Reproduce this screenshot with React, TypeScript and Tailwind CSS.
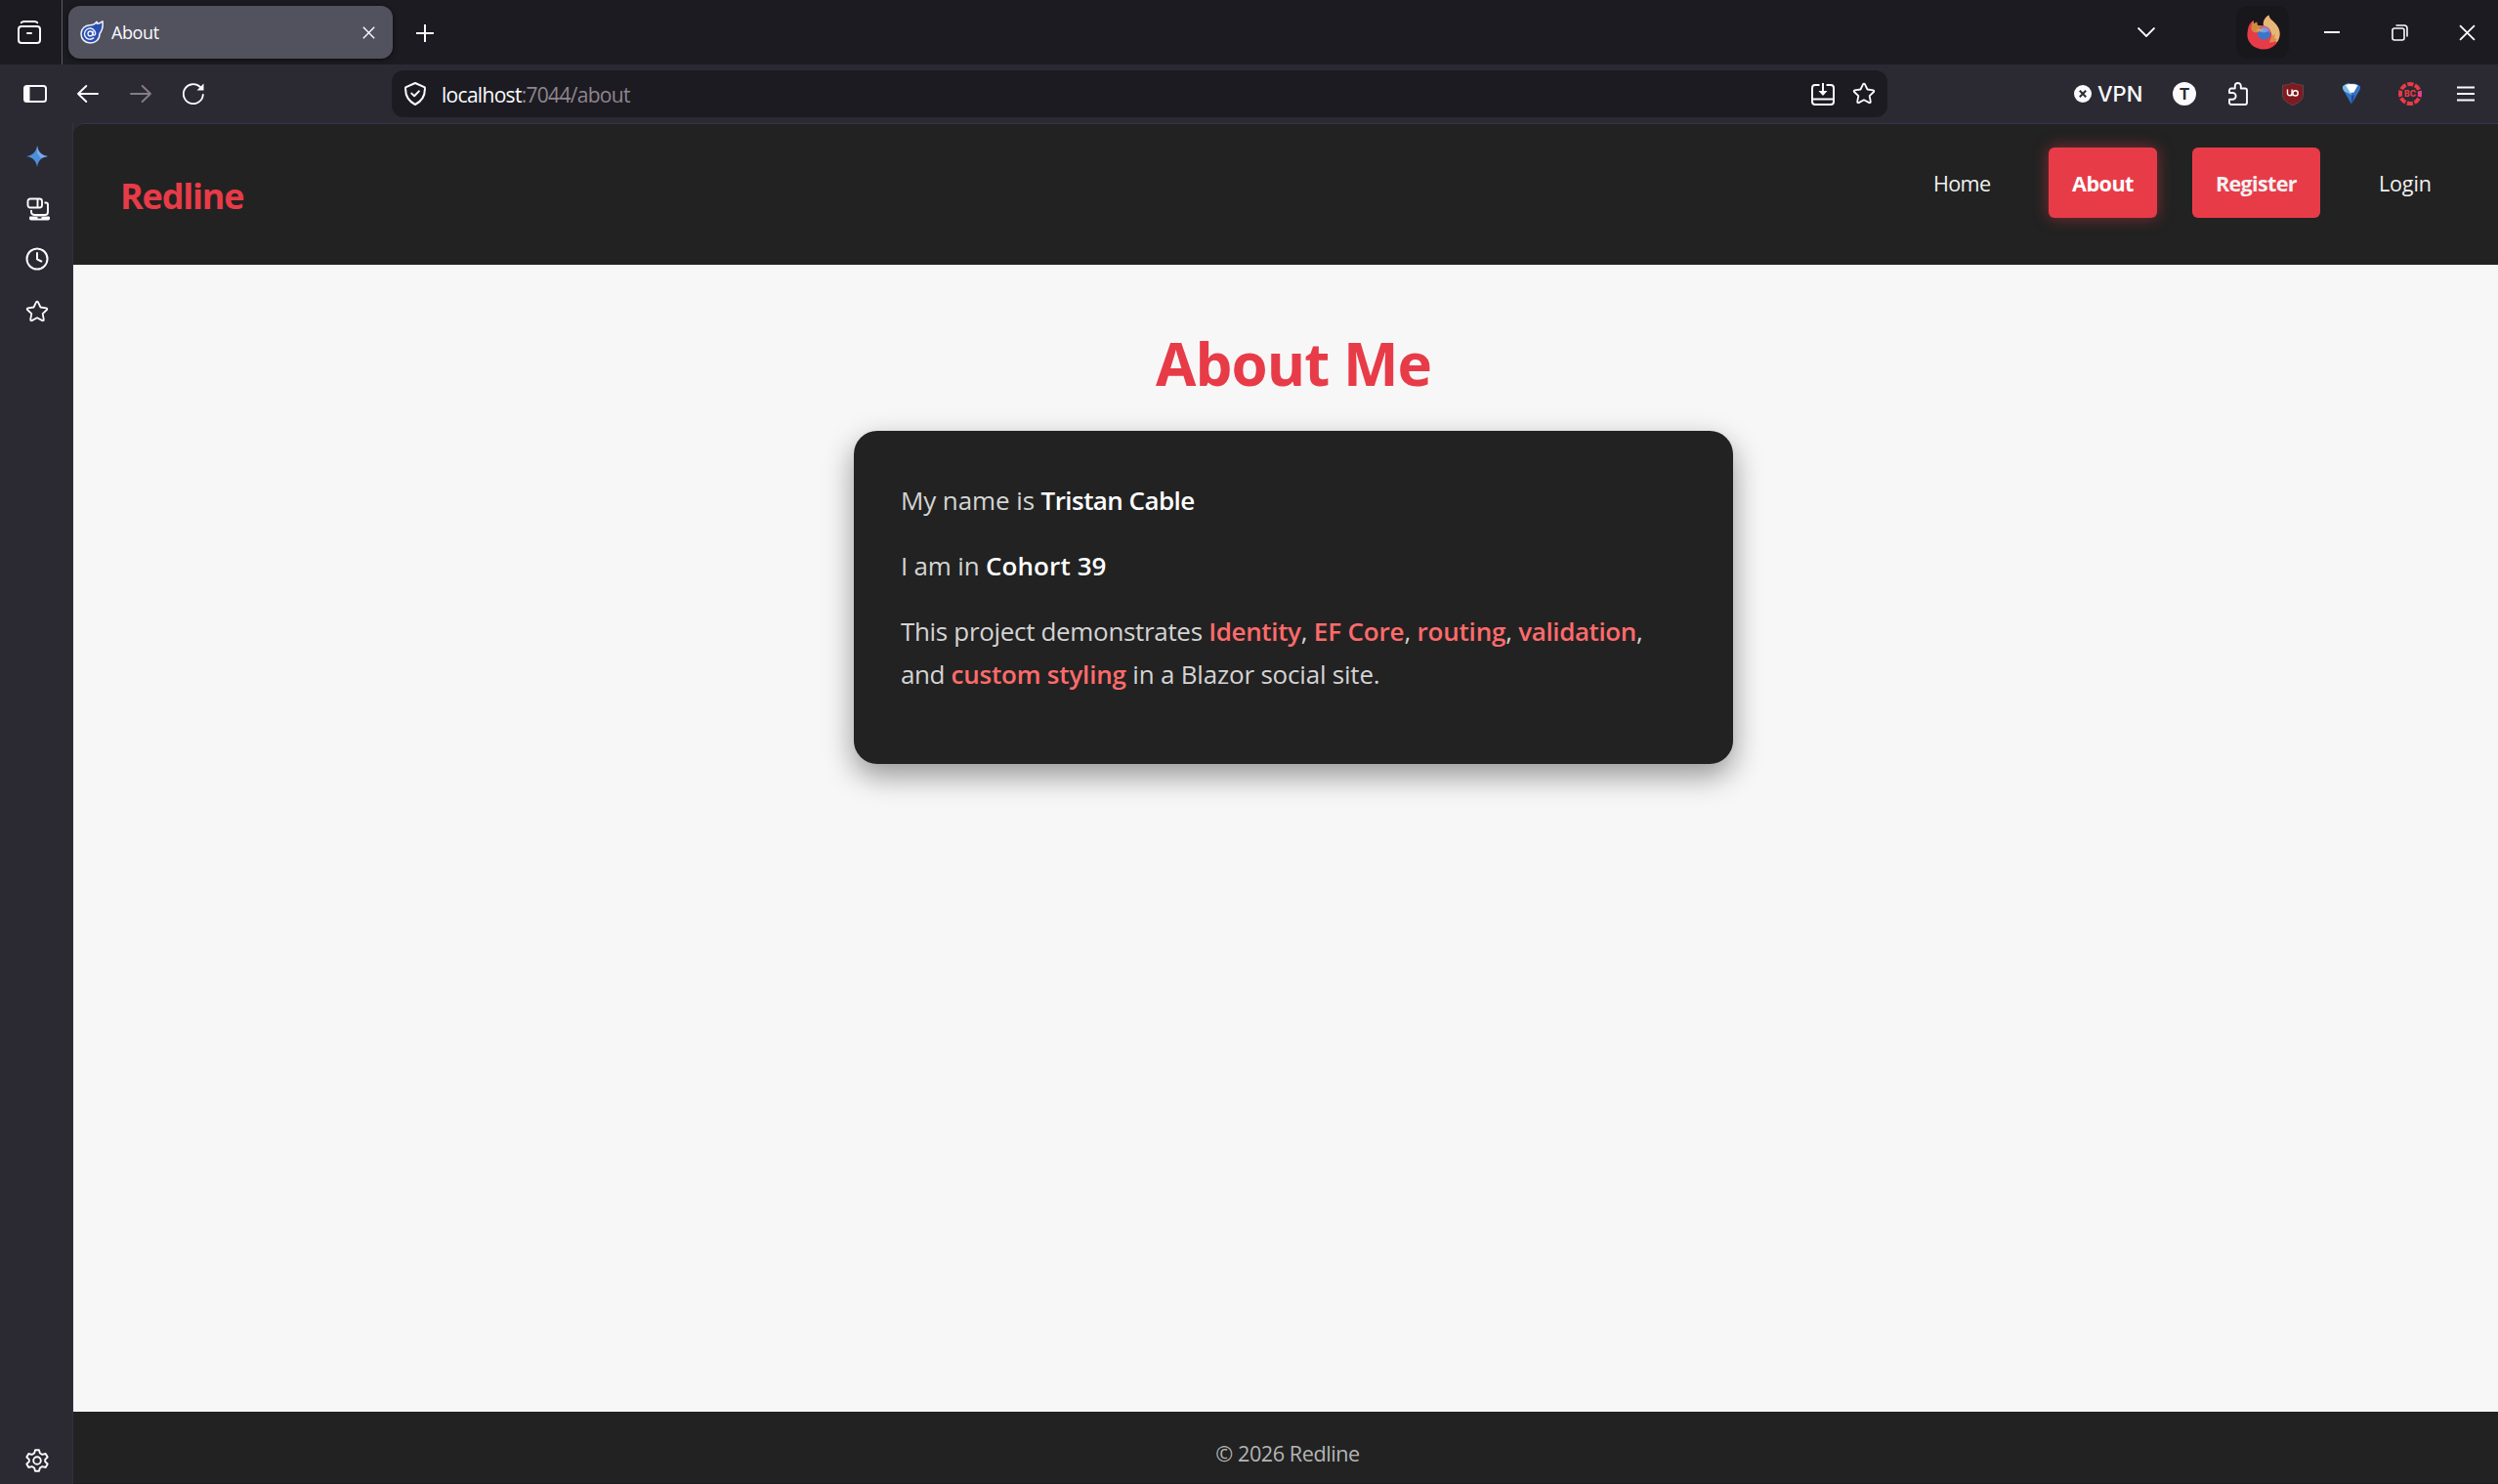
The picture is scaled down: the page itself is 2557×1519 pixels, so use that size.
import type { ReactNode } from 'react';

type IconProps = { className?: string };

function Stroke({ className = 'size-6', width = 2, children }: { className?: string; width?: number; children: ReactNode }) {
  return (
    <svg viewBox="0 0 24 24" fill="none" stroke="currentColor" strokeWidth={width} strokeLinecap="round" strokeLinejoin="round" className={`shrink-0 ${className}`}>
      {children}
    </svg>
  );
}

const StarIcon = ({ className }: IconProps) => (
  <Stroke className={className} width={1.8}>
    <path d="M11.1 2.1a1 1 0 0 1 1.8 0l2.6 5.4 6 .8a1 1 0 0 1 .5 1.7l-4.3 4.1 1.1 5.9a1 1 0 0 1-1.5 1.1L12 18.2l-5.3 2.9a1 1 0 0 1-1.5-1.1l1.1-5.9L2 10a1 1 0 0 1 .5-1.7l6-.8z" />
  </Stroke>
);

const BlazorIcon = () => (
  <svg viewBox="0 0 24 24" className="size-6 shrink-0">
    <path d="M23 .8c.6 5-.2 9.4-3 12.700 0 6-4.3 9.5-9.500 9.500C5 23 1 19 1 13.800 1 8.300 5.200 5 10 4.800c3.400 0 5.400-1.200 7-3.500l.6 1.900c1.800-.2 3.700-1 5.400-2.400z" fill="#2b4fae" stroke="#eef2ff" strokeWidth="1.5" strokeLinejoin="round" />
    <path d="M13.700 17.900a5.600 5.600 0 1 1 2-4.300c0 1.900-2.600 2.100-2.600.1v-2.400" fill="none" stroke="#eef2ff" strokeWidth="1.4" strokeLinecap="round" />
    <circle cx="10.4" cy="13.4" r="2.4" fill="none" stroke="#eef2ff" strokeWidth="1.4" />
  </svg>
);

const FirefoxIcon = () => (
  <svg viewBox="0 0 34 36" className="ml-px h-9 w-[34px]">
    <path d="M1 15C1.500 11 3.500 8 6.500 6l.7 3.200L10 7.500l1 3.500h6C16 6.500 19 2.500 22.500.5c.6 4 3 5 5.500 7.500 3.800 3.600 5.800 7.500 5.600 12C33.300 29.500 26 35.500 17 35.500S0 29 .3 20z" fill="#e83b48" />
    <path d="M17 11c-1-4.500 2-8.500 5.500-10.500.6 4 3 5 5.500 7.500 3.800 3.600 5.800 7.500 5.600 12-.1 3-1.100 5.600-2.800 8-2-1.500-5.300-1-7.800.5 2.500-3 3.400-7 1.500-11-1.500-3.500-4.500-4.500-7.500-6.500z" fill="#e6b877" />
    <path d="M6.500 6l.7 3.200L10 7.500l1 3.500c1.500 0 3 .4 4 1l2.500 3.200c-1.500 1.800-4.500.3-6.500 2.800-2.500 1-5-.2-6.500-3 0-4 .5-7 2-9z" fill="#cf8a3e" />
    <circle cx="17.5" cy="19" r="6.8" fill="#3f74c8" />
    <path d="M11.500 15.500c2-4.500 7-5.500 10.500-2 1.600 1.500 2.500 3.500 2 5.500-3-2.500-6-3-8.500-2 .8-.8 1.500-1 2.200-2-2 .8-4 .8-6.200.5z" fill="#c9618e" />
    <path d="M12.500 17c2.500 1.500 6.500 2 10-.5-1-2.800-4-4-7-3z" fill="#6f9fe8" />
    <path d="M10 14.500c2.500 0 5 .2 7.200 1-1.200 1.600-4.200.8-6.200 2.500z" fill="#dda35a" />
    <path d="M25 22l4-2-1 4 3 1-3 3-5 .5z" fill="#dd8a4a" />
  </svg>
);

const UblockIcon = () => (
  <svg viewBox="0 0 22 24" className="h-6 w-[22px]">
    <path d="M11 .5c3 1.800 6.500 2.700 10.500 2.700V13c0 5-4 8.300-10.500 10.700C4.500 21.300.5 18 .5 13V3.200C4.500 3.200 8 2.300 11 .5z" fill="#801a1e" stroke="#5f5560" strokeWidth=".7" />
    <path d="M5.500 7.500v4a2.300 2.300 0 0 0 4.600 0v-4m0 4.500v2.200" fill="none" stroke="#fff" strokeWidth="1.4" />
    <circle cx="13.6" cy="11.4" r="2.6" fill="none" stroke="#fff" strokeWidth="1.4" />
  </svg>
);

const GemIcon = () => (
  <svg viewBox="0 0 20 22" className="h-[22px] w-5">
    <path d="M1 3.500C3 1 6.500.5 10 .5s7 .5 9 3c.3 2-.4 3.800-1.600 5.500L11.500 19 10 21.500 3 9.500C1.500 7.500.7 5.600 1 3.500z" fill="#3572c6" />
    <path d="M1 3.500C3 1 6 .6 8 .6L10 12 3 8.800C1.600 7 .8 5.400 1 3.500z" fill="#7db9e8" />
    <path d="M4 2.300C8 .6 12.500.6 16.500 2.300L12.500 9.500 9 10z" fill="#fff" />
    <path d="m10 13 3-1-2 8-1 1.500z" fill="#1d4796" />
  </svg>
);

const CanvasIcon = () => (
  <svg viewBox="0 0 24 24" className="size-6">
    <circle cx="12" cy="12" r="10" fill="none" stroke="#e83b48" strokeWidth="4" strokeDasharray="6.200 1.654" strokeDashoffset="3.100" />
    <path d="M21.600 9.200a10 10 0 0 1 0 5.600" fill="none" stroke="#e83e8c" strokeWidth="4" />
    <text x="12" y="15" textAnchor="middle" className="fill-[#e83b48] font-[Inter,sans-serif] text-[8.5px] font-extrabold">BC</text>
  </svg>
);

const CloseIcon = ({ className }: IconProps) => (
  <svg viewBox="0 0 16 16" fill="none" stroke="currentColor" strokeWidth="1.7" className={className}>
    <path d="m1 1 14 14M15 1 1 15" />
  </svg>
);

function TabStrip() {
  return (
    <div className="flex h-[66px] bg-[#1c1b22]">
      <div className="flex w-16 items-center border-r border-[#5b5a66] pl-[18px]">
        <svg viewBox="0 0 24 24" fill="none" stroke="currentColor" strokeWidth="2" strokeLinecap="round" className="size-6">
          <rect x="1" y="6" width="22" height="17" rx="3" />
          <path d="M3.800 2.200C4.500 1.400 5.200 1 6.500 1h11c1.300 0 2 .4 2.700 1.200M10 13h4" />
        </svg>
      </div>
      <div className="ml-1.5 mt-1.5 flex h-[54px] w-[332px] items-center rounded-xl bg-[#52525e] pl-3 pr-[18px] shadow-[0_1px_5px_rgba(0,0,0,0.6)]">
        <BlazorIcon />
        <span className="ml-2 mt-px flex-1 text-[18px] tracking-[-0.4px]">About</span>
        <CloseIcon className="size-[13px]" />
      </div>
      <svg viewBox="0 0 18 18" stroke="currentColor" strokeWidth="2" className="ml-[23.500px] mt-[25px] size-[18px]">
        <path d="M9 0v18M0 9h18" />
      </svg>
      <div className="ml-auto flex">
        <svg viewBox="0 0 18 10" fill="none" stroke="currentColor" strokeWidth="1.9" className="mr-[83px] mt-7 h-2.5 w-[18px]">
          <path d="M.5.5 9 9 17.500.5" />
        </svg>
        <div className="mt-1.5 flex size-[54px] items-center justify-center rounded-xl bg-[#18171c]">
          <FirefoxIcon />
        </div>
        <div className="ml-9 mt-8 h-0.5 w-4 bg-[#fbfbfe]" />
        <svg viewBox="0 0 17 17" fill="none" stroke="currentColor" strokeWidth="1.6" className="ml-[53px] mt-[25px] size-[17px]">
          <rect x="1" y="4" width="12" height="12" rx="2" />
          <path d="M4.500 1H13a3 3 0 0 1 3 3v8.500" />
        </svg>
        <CloseIcon className="ml-[52px] mr-[23px] mt-[25px] size-[17px]" />
      </div>
    </div>
  );
}

function Toolbar() {
  return (
    <div className="flex h-[60px] items-center bg-[#2b2a33]">
      <svg viewBox="0 0 24 18" className="ml-6 h-[18px] w-6">
        <rect x="1" y="1" width="22" height="16" rx="2.5" fill="none" stroke="currentColor" strokeWidth="2" />
        <path d="M2 1h4.500v16H2z" fill="currentColor" />
      </svg>
      <svg viewBox="0 0 22 18" fill="none" stroke="currentColor" strokeWidth="1.9" strokeLinecap="round" strokeLinejoin="round" className="ml-[31px] h-[18px] w-[22px]">
        <path d="M21 9H1m8.300-8L1 9l8.300 8" />
      </svg>
      <svg viewBox="0 0 22 18" fill="none" stroke="currentColor" strokeWidth="1.9" strokeLinecap="round" strokeLinejoin="round" className="ml-8 h-[18px] w-[22px] text-[#857d87]">
        <path d="M1 9h20m-8.300-8L21 9l-8.300 8" />
      </svg>
      <svg viewBox="0 0 22 22" fill="none" stroke="currentColor" strokeWidth="1.9" strokeLinecap="round" className="ml-8 size-[22px]">
        <path d="M20.800 12A10 10 0 1 1 18 4.200" />
        <path d="M21.500.5v7h-7z" fill="currentColor" stroke="none" />
      </svg>

      <div className="ml-48 flex h-12 w-[1531px] items-center rounded-xl bg-[#1c1b22] px-3">
        <Stroke>
          <path d="M12 1 21.800 5.300c.6 7-2.300 13.900-9.800 17.700C4.500 19.200 1.600 12.300 2.200 5.300z" />
          <path d="m8.300 11.600 2.800 2.700 4.800-4.900" />
        </Stroke>
        <span className="ml-[15px] mt-[3px] text-[21px] tracking-[-0.7px]">
          localhost<span className="text-[#8f858f]">:7044/about</span>
        </span>
        <svg viewBox="0 0 24 24" fill="none" stroke="currentColor" strokeWidth="2" className="ml-auto size-6">
          <path d="M8.500 3H4a3 3 0 0 0-3 3v14a3 3 0 0 0 3 3h16a3 3 0 0 0 3-3V6a3 3 0 0 0-3-3h-4.500M1 17.500h22M12 1v10" />
          <path d="M7.500 9h9L12 14z" fill="currentColor" stroke="none" />
        </svg>
        <StarIcon className="ml-[18px] size-6" />
      </div>

      <div className="ml-auto flex items-center">
        <svg viewBox="0 0 18 18" className="size-[18px]">
          <circle cx="9" cy="9" r="9" fill="currentColor" />
          <path d="m5.800 5.800 6.400 6.400m0-6.400-6.400 6.400" stroke="#2b2a33" strokeWidth="2" />
        </svg>
        <span className="ml-1.5 w-[46px] font-[Inter,sans-serif] text-[22px] font-medium">VPN</span>
        <div className="ml-[31px] flex size-6 items-center justify-center rounded-full bg-[#fbfbfe] font-[Inter,sans-serif] text-[16px] font-bold text-[#2b2a33]">T</div>
        <svg viewBox="0 0 20 24" fill="none" stroke="currentColor" strokeWidth="1.9" strokeLinejoin="round" className="ml-[33px] h-6 w-5">
          <path d="M1 11V8.500a2 2 0 0 1 2-2h3.800V4a3 3 0 0 1 6 0v2.500H17a2 2 0 0 1 2 2V21a2 2 0 0 1-2 2H3a2 2 0 0 1-2-2v-3.300h3.300a3.300 3.300 0 0 0 0-6.700z" />
        </svg>
        <div className="ml-[35px]"><UblockIcon /></div>
        <div className="ml-[39px]"><GemIcon /></div>
        <div className="ml-[38px]"><CanvasIcon /></div>
        <svg viewBox="0 0 18 16" stroke="currentColor" strokeWidth="1.8" className="ml-9 mr-6 h-4 w-[18px]">
          <path d="M0 1.500h18M0 8h18M0 14.500h18" />
        </svg>
      </div>
    </div>
  );
}

function Sidebar() {
  return (
    <aside className="flex w-[75px] shrink-0 flex-col items-center border-r border-[#32313f] bg-[#2b2a33] pb-3 pl-0.5 pt-[23px]">
      <svg viewBox="0 0 22 22" className="size-[22px]">
        <path d="M11 0c1 6.500 4.200 9.800 11 11-6.800 1.200-10 4.500-11 11C10 15.500 6.800 12.200 0 11 6.800 9.800 10 6.500 11 0z" fill="#4a8fdc" />
        <path d="M11 0c1 6.500 4.200 9.800 11 11l-7 1.700-4-4.700z" fill="#7fa6e6" />
      </svg>
      <svg viewBox="0 0 24 24" fill="none" stroke="currentColor" strokeWidth="1.9" strokeLinejoin="round" className="ml-px mt-[31px] size-6">
        <rect x="1.5" y="1.5" width="14.5" height="9" rx="2.5" />
        <path d="M11.500 1.500v9M18.500 5.500h1.500a2 2 0 0 1 2 2V15c0 2-1 3-3 3H8.500c-2 0-3.500-1-3.500-3v-2" />
        <path d="M4 19.500h19a1 1 0 0 1 1 1v1.300a1.800 1.800 0 0 1-1.800 1.800H4.800A1.800 1.800 0 0 1 3 21.800v-1.300a1 1 0 0 1 1-1z" fill="currentColor" stroke="none" />
        <path d="M11.500 20.800h4" stroke="#2b2a33" strokeWidth="1.5" />
      </svg>
      <Stroke className="mt-[27px] size-6">
        <circle cx="12" cy="12" r="10.5" />
        <path d="M12 6v6.300l4.300 2.200" />
      </Stroke>
      <StarIcon className="mt-[30px] size-6" />
      <Stroke className="mt-auto size-6" width={1.9}>
        <path d="M10 1.200h4l.9 3.300 2.400 1.400 3.400-.9 2 3.500-2.500 2.400v2.200l2.500 2.400-2 3.500-3.400-.9-2.400 1.400-.9 3.300h-4l-.9-3.300-2.400-1.400-3.400.9-2-3.500 2.500-2.400v-2.200L1.300 8.500l2-3.500 3.400.9 2.400-1.400z" />
        <circle cx="12" cy="12" r="3.8" />
      </Stroke>
    </aside>
  );
}

function SiteHeader() {
  return (
    <header className="flex h-36 items-start justify-between bg-[#222222] pl-12 pr-[45px] pt-6 text-[#f1f1f1]">
      <a className="mt-[26px] text-[36px] leading-[48px] font-bold tracking-[-1.2px] text-[#e83b48]">Redline</a>
      <nav className="flex gap-9 text-[21.6px] leading-[70px]">
        <a className="h-[72px] w-[106px] px-6 pt-0.5 tracking-[-0.65px]">Home</a>
        <a className="h-[72px] w-[111px] rounded-md bg-[#e83b48] px-6 pt-0.5 font-bold tracking-[-0.5px] text-white shadow-[0_0_15px_rgba(230,57,70,0.5)]">About</a>
        <a className="h-[72px] w-[131px] rounded-md bg-[#e83b48] px-6 pt-0.5 font-bold tracking-[-0.7px]">Register</a>
        <a className="h-[72px] w-[101px] px-6 pt-0.5 tracking-[-0.2px]">Login</a>
      </nav>
    </header>
  );
}

const Tag = ({ children, className = '' }: { children: ReactNode; className?: string }) => (
  <span className={`font-semibold text-[#ff6b6b] ${className}`}>{children}</span>
);

function AboutPage() {
  return (
    <main className="flex-1 bg-[#f7f7f7] pl-4 pt-[65px]">
      <h1 className="text-center text-[60px] leading-[72px] font-bold tracking-[-0.95px] text-[#e83b48]">About Me</h1>
      <section className="mx-auto mt-[33px] h-[341px] w-[900px] rounded-3xl bg-[#222222] px-12 pt-[49px] text-[26px] leading-[44.88px] text-[#d4d4d4] shadow-[0_12px_30px_rgba(0,0,0,0.4)]">
        <p className="mb-[22.4px] tracking-[-0.1px]">
          My name is <span className="font-semibold tracking-[-0.57px] text-white">Tristan Cable</span>
        </p>
        <p className="mb-[21.4px] tracking-[-0.2px]">
          I am in <span className="font-semibold tracking-[0.1px] text-white">Cohort 39</span>
        </p>
        <p className="tracking-[-0.2px]">
          <span className="tracking-[-0.33px]">This project demonstrates </span>
          <Tag className="tracking-[-0.35px]">Identity</Tag>, <Tag className="tracking-[-0.15px]">EF Core</Tag>, <Tag>routing</Tag>,{' '}
          <Tag className="tracking-[-0.4px]">validation</Tag>,
          <br />
          <span className="tracking-[-0.4px]">and </span>
          <Tag className="tracking-[-0.2px]">custom styling</Tag> in a Blazor social site.
        </p>
      </section>
    </main>
  );
}

export default function App() {
  return (
    <div className="flex h-[1519px] w-[2557px] flex-col overflow-hidden bg-[#2b2a33] font-['Open_Sans',sans-serif] text-[#fbfbfe]">
      <TabStrip />
      <Toolbar />
      <div className="flex flex-1">
        <Sidebar />
        <div className="flex flex-1 flex-col overflow-hidden rounded-tl-xl border-t border-[#35344a]">
          <SiteHeader />
          <AboutPage />
          <footer className="h-[74px] border-b border-[#1c1b22] bg-[#222222] pl-1 pt-[27px] text-center text-[21.6px] leading-8 tracking-[-0.43px] text-[#b5b5b5]">
            © 2026 Redline
          </footer>
        </div>
      </div>
    </div>
  );
}
